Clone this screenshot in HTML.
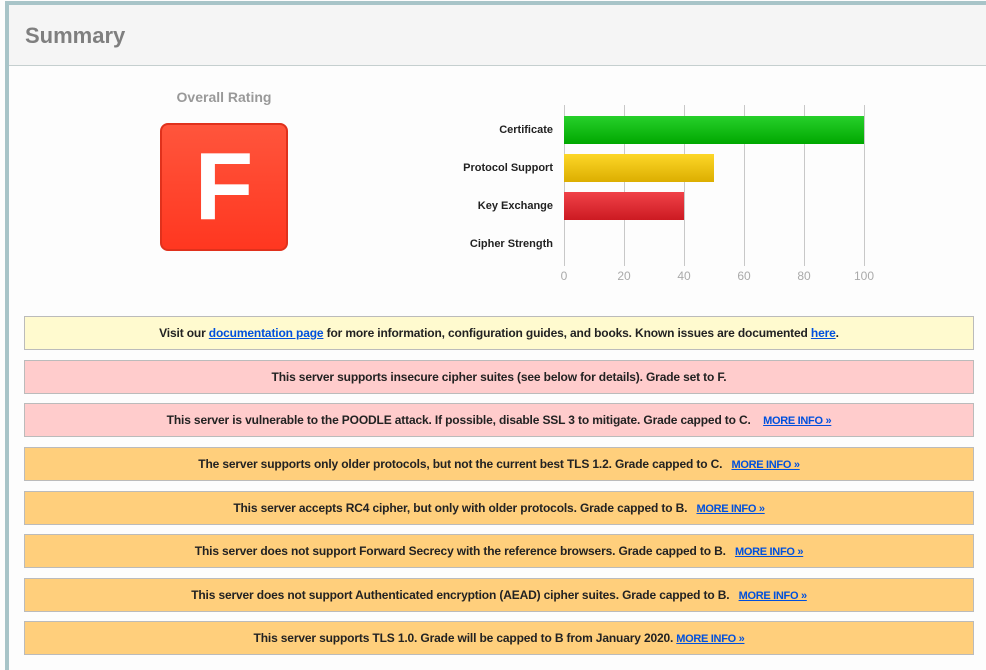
<!DOCTYPE html>
<html><head><style>
body{margin:0;width:986px;height:670px;background:#fdfdfd;font-family:"Liberation Sans",Arial,sans-serif;position:relative;overflow:hidden}
.tb{position:absolute;left:5px;top:1px;width:981px;height:4px;background:#a8c4c8}
.lb{position:absolute;left:5px;top:1px;width:4px;height:669px;background:#a8c4c8}
.hd{position:absolute;left:9px;top:5px;width:977px;height:60px;background:#f5f5f5;border-bottom:1px solid #c5cfcf}
.hd span{position:absolute;left:16px;top:18px;font-size:22px;font-weight:bold;color:#7f7f7f}
.or{position:absolute;left:160px;width:128px;top:89px;text-align:center;font-size:14px;font-weight:bold;color:#999}
.f{position:absolute;left:160px;top:123px;width:124px;height:124px;border:2px solid #e0311c;border-radius:8px;background:linear-gradient(#ff553c,#ff3720);color:#fff;font-size:96px;font-weight:bold;text-align:center;line-height:124px}
.grid{position:absolute;top:105px;height:161px;width:1px;background:#c8c8c8}
.lab{position:absolute;right:433px;font-size:11px;font-weight:bold;color:#222;white-space:nowrap}
.tick{position:absolute;top:269px;font-size:12px;color:#aaa;width:40px;text-align:center}
.bar{position:absolute;left:564px;height:28px}
.box{position:absolute;left:24px;width:950px;border:1px solid #bbb;font-size:12px;font-weight:bold;color:#222;text-align:center;box-sizing:border-box;height:34px;line-height:32px;letter-spacing:-0.15px}
.y{background:#fffacf}.r{background:#ffcccc}.o{background:#ffcf7c}
a{color:#0050dd;text-decoration:underline}
.m{font-size:11px;margin-left:6px;letter-spacing:-0.3px}
</style></head><body>
<div class="tb"></div><div class="lb"></div>
<div class="hd"><span>Summary</span></div>
<div class="or">Overall Rating</div>
<div class="f">F</div>
<div class="grid" style="left:564px"></div><div class="grid" style="left:624px"></div><div class="grid" style="left:684px"></div><div class="grid" style="left:744px"></div><div class="grid" style="left:804px"></div><div class="grid" style="left:864px"></div>
<div class="bar" style="top:116px;width:300px;background:linear-gradient(#27d02b,#00a800)"></div>
<div class="bar" style="top:154px;width:150px;background:linear-gradient(#fdd728,#dcae00)"></div>
<div class="bar" style="top:192px;width:120px;background:linear-gradient(#f04248,#cc1a22)"></div>
<div class="lab" style="top:124px">Certificate</div>
<div class="lab" style="top:162px">Protocol Support</div>
<div class="lab" style="top:200px">Key Exchange</div>
<div class="lab" style="top:238px">Cipher Strength</div>
<div class="tick" style="left:544px">0</div><div class="tick" style="left:604px">20</div><div class="tick" style="left:664px">40</div><div class="tick" style="left:724px">60</div><div class="tick" style="left:784px">80</div><div class="tick" style="left:844px">100</div>
<div class="box y" style="top:316px">Visit our <a>documentation page</a> for more information, configuration guides, and books. Known issues are documented <a>here</a>.</div>
<div class="box r" style="top:360px">This server supports insecure cipher suites (see below for details). Grade set to F.</div>
<div class="box r" style="top:403px">This server is vulnerable to the POODLE attack. If possible, disable SSL 3 to mitigate. Grade capped to C. &nbsp;<a class="m">MORE INFO »</a></div>
<div class="box o" style="top:447px">The server supports only older protocols, but not the current best TLS 1.2. Grade capped to C. <a class="m">MORE INFO »</a></div>
<div class="box o" style="top:491px">This server accepts RC4 cipher, but only with older protocols. Grade capped to B. <a class="m">MORE INFO »</a></div>
<div class="box o" style="top:534px">This server does not support Forward Secrecy with the reference browsers. Grade capped to B. <a class="m">MORE INFO »</a></div>
<div class="box o" style="top:578px">This server does not support Authenticated encryption (AEAD) cipher suites. Grade capped to B. <a class="m">MORE INFO »</a></div>
<div class="box o" style="top:621px">This server supports TLS 1.0. Grade will be capped to B from January 2020.<a class="m" style="margin-left:3px">MORE INFO »</a></div>
</body></html>
